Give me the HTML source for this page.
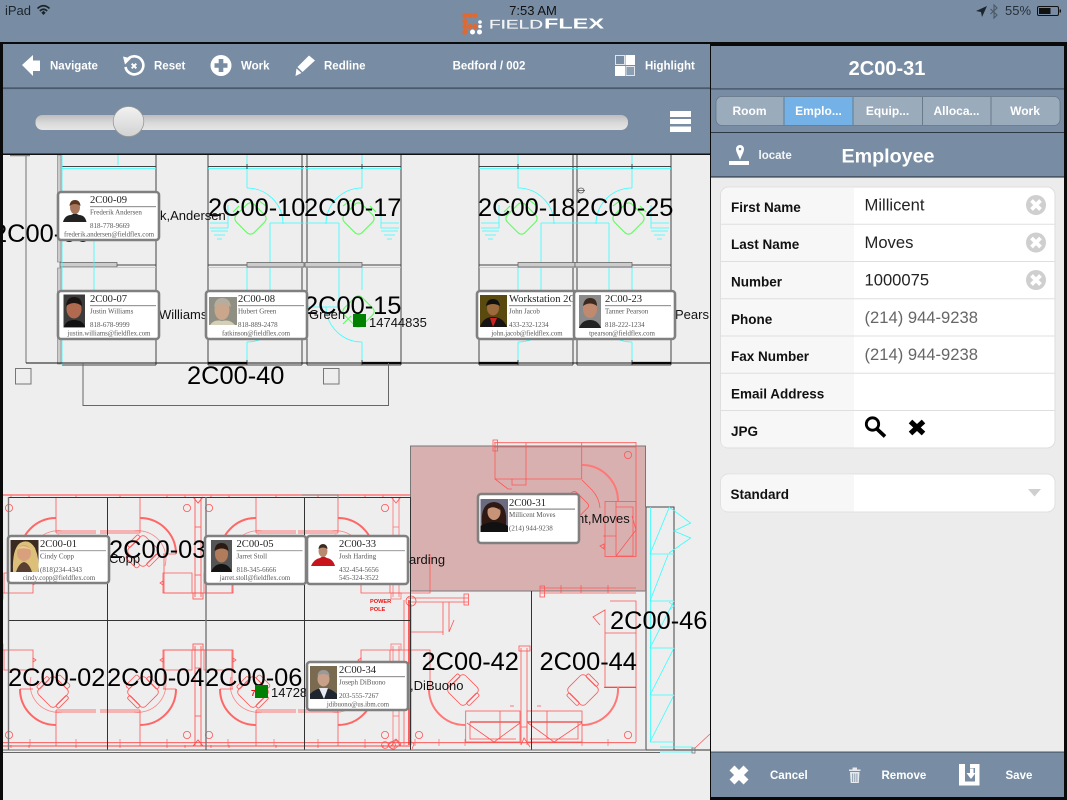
<!DOCTYPE html>
<html><head><meta charset="utf-8"><title>FieldFLEX</title>
<style>
html,body{margin:0;padding:0;background:#eee;width:1067px;height:800px;overflow:hidden}
svg{display:block;position:absolute;left:0;top:0}
text{font-family:"Liberation Sans",sans-serif}
.r{font-size:25.4px;fill:#000}
.n{font-size:13px;fill:#111}
.cd text{font-family:"Liberation Serif",serif}
.t{font-size:10.6px;fill:#222}
.s{font-size:7px;fill:#555}
.e{font-size:6.8px;fill:#555;text-anchor:middle}
.tb{font-size:11.5px;font-weight:bold;fill:#fff}
.tab{font-size:12px;font-weight:bold;fill:#fff;text-anchor:middle}
.lb{font-size:13.5px;font-weight:bold;fill:#111}
.v{font-size:16.6px;fill:#222}
.p{font-size:16.6px;fill:#666}
</style></head><body>
<svg width="1067" height="800" viewBox="0 0 1067 800" xmlns="http://www.w3.org/2000/svg">
<defs>
<clipPath id="pl"><rect x="3" y="155" width="707" height="645"/></clipPath>
<g id="ra" fill="none" stroke="#f55" stroke-width=".8">
<path d="M140 497V533M100 531H140M100 533H140M163 554H176M120 495V498M167 495V498M185 495V498"/>
<path d="M140 518A36 36 0 0 1 176 554" stroke="#f66" stroke-width="2"/>
<path d="M134 531A28 28 0 0 1 165 566" stroke-opacity=".7"/>
<g transform="rotate(45 143 551)"><rect x="131" y="539" width="24" height="24" rx="4"/><rect x="127.500" y="543" width="4" height="15" rx="1.500"/><rect x="154.500" y="543" width="4" height="15" rx="1.500"/><rect x="135" y="563" width="16" height="5" rx="2"/></g>
<path d="M163 573H192V593H163ZM192 593H232V554"/>
<path d="M160 583L163 581V585Z"/>
<path d="M195 497V597M201 497V597M195 527H201M195 575H201" stroke-opacity=".8"/>
<rect x="193" y="593" width="10" height="6" stroke-opacity=".8"/>
<circle cx="187" cy="508" r="3.600"/>
<path d="M193 497L198 503L203 497"/>
</g>
<g id="ta" fill="none">
<path d="M208 155V365M302 155V365M208 166.500H304M208 265H304M208 365H302" stroke="#444" stroke-width="1"/>
<path d="M247 155V188M247 342V363M270 223V307M210 223H228V228H210M228 223V205M247 268V290" stroke="#3ff" stroke-width=".8"/>
<path d="M208 168.500H304M208 267.500H304M270 223H304M270 307H304" stroke="#3ff" stroke-width=".8"/>
<path d="M247 188A36 36 0 0 1 283 224M247 342A36 36 0 0 0 283 307" stroke="#3ff" stroke-width=".8"/>
<path d="M211 231H228M214 235H225M217 239H222" stroke="#3ff" stroke-width=".8"/>
<rect x="247" y="262.500" width="57" height="4.500" fill="#ccc" stroke="#666" stroke-width=".8"/>
<g stroke="#5f5" stroke-width="1"><rect x="238" y="206" width="25" height="25" rx="5" transform="rotate(45 250.500 218.500)"/><rect x="238" y="299" width="25" height="25" rx="5" transform="rotate(45 250.500 311.500)"/><path d="M258 200l8 6M233 212l6-6M258 316l8 8"/></g>
<path d="M208 363H247" stroke="#000" stroke-width="2.200"/>
<path d="M247 164V169M247 360V365" stroke="#222" stroke-width=".8"/>
</g>
</defs>

<rect width="1067" height="800" fill="#eeeeee"/>

<!-- plan -->
<g clip-path="url(#pl)">
<!-- upper block -->
<path d="M26 155V363" stroke="#888" stroke-width="1.200" fill="none"/>
<rect x="57.500" y="155" width="3.500" height="107" fill="#ccc" stroke="#888" stroke-width=".7"/>
<rect x="57.500" y="268" width="3.500" height="96" fill="#ccc" stroke="#888" stroke-width=".7"/>
<rect x="60" y="262.500" width="57" height="4.500" fill="#ccc" stroke="#666" stroke-width=".8"/>
<path d="M62 166.500H156M117 265H156M62 365H156M156 155V365" stroke="#444" fill="none"/>
<path d="M62 155V365M118 155V165M94 240V290" stroke="#3ff" stroke-width=".8" fill="none"/>
<path d="M62 168.500H156M62 267.500H156" stroke="#3ff" stroke-width=".8"/>
<use href="#ta"/>
<use href="#ta" transform="matrix(-1 0 0 1 609 0)"/>
<use href="#ta" transform="translate(271 0)"/>
<use href="#ta" transform="matrix(-1 0 0 1 879 0)"/>
<path d="M26 363H710" stroke="#111" stroke-width="1" fill="none"/>
<path d="M83 363V405.500H388.500V363" stroke="#666" stroke-width="1" fill="none"/>
<rect x="15.500" y="368.500" width="15.500" height="15.500" fill="none" stroke="#777"/>
<rect x="323.500" y="368.500" width="15.500" height="15.500" fill="none" stroke="#777"/>
<path d="M10 155.500H30" stroke="#888" stroke-width="1.500"/>
<ellipse cx="581" cy="190.500" rx="3" ry="2.500" fill="none" stroke="#555" stroke-width=".8"/>
<path d="M577 190.500H585" stroke="#555" stroke-width=".8"/>

<!-- highlight -->
<rect x="410.500" y="446" width="235" height="145" fill="#d9b0b0" stroke="#777" stroke-width="1"/>

<!-- lower block red -->
<use href="#ra"/>
<use href="#ra" transform="matrix(-1 0 0 1 196 0)"/>
<use href="#ra" transform="matrix(-1 0 0 1 396 0)"/>
<use href="#ra" transform="translate(198 0)"/>
<use href="#ra" transform="matrix(1 0 0 -1 0 1243)"/>
<use href="#ra" transform="matrix(-1 0 0 -1 196 1243)"/>
<use href="#ra" transform="matrix(-1 0 0 -1 396 1243)"/>
<use href="#ra" transform="matrix(1 0 0 -1 198 1243)"/>
<path d="M3 495H410" stroke="#f77" stroke-width="1.400" fill="none"/>
<path d="M3 742.700H636M3 746H410" stroke="#f44" stroke-width=".9" fill="none"/>
<path d="M30 739V746M76 739V746M120 739V746M167 739V746M228 739V746M274 739V746M318 739V746M365 739V746M415 739V746M439 739V746M465 739V746M582 739V746M608 739V746" stroke="#f66" stroke-width=".7"/>

<!-- 2C00-31 room + right rooms red -->
<g fill="none" stroke="#f55" stroke-width=".8">
<path d="M494 442.700H636M494 447H636M495 443V479H581.700V443M526 443V479M495 479L508 489H512M512 479V485H526V479"/>
<rect x="493" y="440" width="4.500" height="11" />
<path d="M582 465A36 36 0 0 1 618 501" stroke-width="2" stroke="#f77"/>
<path d="M582 480L592 490A30 30 0 0 1 600 508" />
<g transform="rotate(45 575 505)"><rect x="564" y="495" width="22" height="20" rx="3"/></g>
<rect x="605" y="501.500" width="31" height="55"/>
<path d="M616 507H633V556H616M603 536H616M616 501V556M632 516L636 530L616 556M600 546L604 544V549Z"/>
<circle cx="628" cy="455" r="3.600"/>
<path d="M636 442V556M540 588H636M540 593H636M561 585V593M581 585V593M608 585V593"/>
<rect x="540" y="586" width="4.500" height="11"/>
<path d="M408 598H468M408 602H468"/>
<rect x="464" y="594" width="4.500" height="11"/>
<circle cx="411" cy="601" r="5"/>
<path d="M443 602V632H411M449 602V632L454 620M404 600V745M411 604V745"/>
<path d="M409 600V745" stroke="#f22" stroke-width="1.400"/>
<path d="M443 632V635M610 601H636V633H605V610L593 617L600 625M636 601V742M605 633V687H636"/>
<path d="M604 687.500H636" stroke="#f22"/>
<path d="M429 690A36 36 0 0 0 465 725M618 687A36 36 0 0 1 582 725" stroke-width="2" stroke="#f77"/>
<g transform="rotate(45 463 690)"><rect x="451" y="678" width="24" height="24" rx="4"/><rect x="447.500" y="682" width="4" height="15" rx="1.500"/><rect x="474.500" y="682" width="4" height="15" rx="1.500"/></g>
<g transform="rotate(-45 583 690)"><rect x="571" y="678" width="24" height="24" rx="4"/><rect x="567.500" y="682" width="4" height="15" rx="1.500"/><rect x="594.500" y="682" width="4" height="15" rx="1.500"/></g>
<rect x="465.700" y="711" width="54.300" height="31"/>
<rect x="527" y="711" width="55" height="31"/>
<path d="M470 722H520M527 722H582" stroke="#e11" stroke-width="1"/>
<path d="M467 723L494 742L520 723M528 723L554 742L582 723M470 722V739H516M578 722V739H530M500 711V739M547 711V739"/>
<path d="M521 648V745M527 648V745"/>
<rect x="519" y="646" width="11" height="5"/>
<path d="M521 727H527M521 745L524 738L530 747M510 706h4M537 706h4"/>
<circle cx="419" cy="735" r="3.600"/><circle cx="628" cy="735" r="3.600"/><circle cx="385" cy="745" r="3.400"/><circle cx="392" cy="745" r="3.400"/>
<path d="M388 745l8-6l5 5l-8 6zM408 739l6 5l-2 5"/>
</g>

<!-- lower block black -->
<path d="M8.500 497.500H410M107.500 497V750M304.500 497V750M410.500 497V750M8 620.500H410M531.500 591V750" stroke="#333" stroke-width="1" fill="none"/>
<path d="M8.500 497V750M206 497V750" stroke="#777" stroke-width="1.400" fill="none"/>
<path d="M302 495H338V499" stroke="#888" fill="none"/>
<path d="M3 750H660M3 752.500H660" stroke="#666" stroke-width=".9" fill="none"/>
<path d="M660 750H710" stroke="#333"/>
<path d="M646 507V750" stroke="#888" stroke-width="1.600"/>
<path d="M646 507H674V750H646" stroke="#444" fill="none"/>

<!-- cyan panel -->
<g fill="none" stroke="#3ff" stroke-width=".8">
<path d="M650.500 507V742M650 554H674M650 601H674M650 648H674M650 695H674M650 742H674"/>
<path d="M650 554L669 508M650 601L668 555M650 648L674 601M650 695L674 648M650 742L674 695"/>
<path d="M669 507L690.700 523L674 531L690.700 538L669 553M669 602L674 606L669 610"/>
<path d="M660 747H692V752H660"/>
</g>
<rect x="692" y="748" width="3" height="5" fill="none" stroke="#777" stroke-width=".8"/>
<path d="M695 748L710 734" stroke="#f55" stroke-width=".8"/>

<!-- labels behind cards -->
<text x="370" y="603" font-size="5.600" font-weight="bold" fill="#e11">POWER</text>
<text x="370" y="611" font-size="5.600" font-weight="bold" fill="#e11">POLE</text>
<text class="r" x="-7" y="242">2C00-09</text>
<text class="r" x="208" y="216">2C00-10</text>
<text class="r" x="304" y="216">2C00-17</text>
<text class="r" x="478" y="216">2C00-18</text>
<text class="r" x="576" y="216">2C00-25</text>
<text class="r" x="304" y="314">2C00-15</text>
<text class="r" x="187" y="384">2C00-40</text>
<text class="r" x="109" y="558">2C00-03</text>
<text class="r" x="8" y="686">2C00-02</text>
<text class="r" x="107" y="686">2C00-04</text>
<text class="r" x="205" y="686">2C00-06</text>
<text class="r" x="421.500" y="670">2C00-42</text>
<text class="r" x="539.500" y="670">2C00-44</text>
<text class="r" x="610" y="629">2C00-46</text>
<text class="n" x="160" y="220">k,Andersen</text>
<text class="n" x="159" y="319">Williams</text>
<text class="n" x="309" y="319">Green</text>
<text class="n" x="675" y="319">Pears</text>
<text class="n" x="109" y="563">Copp</text>
<text class="n" x="409" y="564">arding</text>
<text class="n" x="577" y="523">nt,Moves</text>
<text class="n" x="410" y="690">,DiBuono</text>
<rect x="353" y="314" width="13" height="13" fill="#008000"/>
<text class="n" x="369" y="327">14744835</text>
<rect x="255" y="685" width="13" height="13" fill="#008000"/>
<text class="n" x="271" y="697">14728</text>
<text x="251" y="696" font-size="8" font-weight="bold" fill="#e11">7</text>

<!-- cards -->
<g class="cd">
<g transform="translate(57 191)"><rect x="1" y="1" width="101" height="48" rx="3" fill="#fff" stroke="#808080" stroke-width="2.600"/>
<path d="M6 31Q8 24 14 24L18 22L22 24Q28 24 29.500 31Z" fill="#222"/><ellipse cx="18" cy="16.500" rx="5" ry="6.500" fill="#a8765a"/><path d="M12.500 15Q13 9 18 9Q23 9 23.500 15Q18 11 12.500 15Z" fill="#5a3520"/>
<text class="t" x="33" y="12">2C00-09</text><rect x="33" y="15" width="66" height="1.200" fill="#999"/><text class="s" x="33" y="23.500">Frederik Andersen</text><text class="s" x="33" y="37">818-778-9669</text><text class="e" x="52" y="45.500">frederik.andersen@fieldflex.com</text></g>

<g transform="translate(57 290)"><rect x="1" y="1" width="101" height="48" rx="3" fill="#fff" stroke="#808080" stroke-width="2.600"/>
<rect x="6.500" y="4.500" width="21.500" height="33" fill="#3b3b3b"/><ellipse cx="17" cy="19" rx="7.500" ry="9.500" fill="#b06a50"/><path d="M9 16Q10 7 17 7Q25 7 25 16Q17 10 9 16Z" fill="#1c1412"/><path d="M7 37Q9 30 17 30Q26 30 28 37Z" fill="#111"/>
<text class="t" x="33" y="12">2C00-07</text><rect x="33" y="15" width="66" height="1.200" fill="#999"/><text class="s" x="33" y="23.500">Justin Williams</text><text class="s" x="33" y="37">818-678-9999</text><text class="e" x="52" y="45.500">justin.williams@fieldflex.com</text></g>

<g transform="translate(205 290)"><rect x="1" y="1" width="101" height="48" rx="3" fill="#fff" stroke="#808080" stroke-width="2.600"/>
<rect x="4" y="7" width="28" height="28" fill="#8f8f84"/><ellipse cx="17" cy="20" rx="7.500" ry="10" fill="#c9a68c"/><path d="M9 17Q10 8 17 8Q25 8 26 17Q17 11 9 17Z" fill="#b5ada0"/><path d="M5 35Q9 29 17 31Q25 29 30 35Z" fill="#d6cfb8"/>
<text class="t" x="33" y="12">2C00-08</text><rect x="33" y="15" width="66" height="1.200" fill="#999"/><text class="s" x="33" y="23.500">Hubert Green</text><text class="s" x="33" y="37">818-889-2478</text><text class="e" x="51" y="45.500">fatkinson@fieldflex.com</text></g>

<g transform="translate(476 290)"><rect x="1" y="1" width="101" height="48" rx="3" fill="#fff" stroke="#808080" stroke-width="2.600"/>
<rect x="4" y="5" width="27" height="32" fill="#5a4a10"/><ellipse cx="17" cy="18" rx="6" ry="7.500" fill="#9c6a3c"/><path d="M10 16Q11 9 17 9Q23 9 24 16Q17 12 10 16Z" fill="#111"/><path d="M4 37Q7 27 17 27Q27 27 31 37Z" fill="#181414"/><path d="M14 28L17 37L21 28Z" fill="#c22"/>
<text class="t" x="33" y="12">Workstation 2C00-22</text><rect x="33" y="15" width="62" height="1.200" fill="#999"/><text class="s" x="33" y="23.500">John Jacob</text><text class="s" x="33" y="37">433-232-1234</text><text class="e" x="51" y="45.500">john.jacob@fieldflex.com</text></g>

<g transform="translate(573 290)"><rect x="1" y="1" width="101" height="48" rx="3" fill="#fff" stroke="#808080" stroke-width="2.600"/>
<rect x="6" y="5" width="22" height="33" fill="#8a8a8a"/><ellipse cx="17" cy="19" rx="7" ry="9" fill="#c08a70"/><path d="M10 16Q11 8 17 8Q24 8 24 16Q17 11 10 16Z" fill="#3c2a1e"/><path d="M6 38Q9 30 17 30Q25 30 28 38Z" fill="#222"/>
<text class="t" x="32" y="12">2C00-23</text><rect x="32" y="15" width="66" height="1.200" fill="#999"/><text class="s" x="32" y="23.500">Tanner Pearson</text><text class="s" x="32" y="37">818-222-1234</text><text class="e" x="49" y="45.500">tpearson@fieldflex.com</text></g>

<g transform="translate(7 535)"><rect x="1" y="1" width="101" height="47" rx="3" fill="#fff" stroke="#808080" stroke-width="2.600"/>
<rect x="3.500" y="5" width="28" height="32" fill="#3a2a20"/><path d="M6 37Q5 14 13 8Q22 3 28 13Q33 25 31 37Z" fill="#dcc07a"/><ellipse cx="17" cy="18" rx="7" ry="8" fill="#d9a07e"/><path d="M10 14Q16 8 25 15Q18 12 10 14Z" fill="#e8d08c"/><path d="M9 37Q12 28 17 27Q22 28 25 37Z" fill="#5a4030"/>
<text class="t" x="33" y="12">2C00-01</text><rect x="33" y="15" width="66" height="1.200" fill="#aaa"/><text class="s" x="33" y="23.500">Cindy Copp</text><text class="s" x="33" y="37">(818)234-4343</text><text class="e" x="52" y="45">cindy.copp@fieldflex.com</text></g>

<g transform="translate(204 535)"><rect x="1" y="1" width="101" height="48" rx="3" fill="#fff" stroke="#808080" stroke-width="2.600"/>
<rect x="7" y="5" width="21" height="32" fill="#555"/><ellipse cx="17.500" cy="19" rx="6.500" ry="8.500" fill="#b07c5c"/><path d="M10.500 16Q11 8 17.500 8Q24 8 24.500 16Q18 11 10.500 16Z" fill="#2a1a12"/><path d="M7 37Q10 29 17.500 29Q25 29 28 37Z" fill="#141414"/>
<text class="t" x="32.500" y="12">2C00-05</text><rect x="32.500" y="15" width="66" height="1.200" fill="#aaa"/><text class="s" x="32.500" y="23.500">Jarret Stoll</text><text class="s" x="32.500" y="37">818-345-6666</text><text class="e" x="51" y="45">jarret.stoll@fieldflex.com</text></g>

<g transform="translate(306 535)"><rect x="1" y="1" width="101" height="48" rx="3" fill="#fff" stroke="#808080" stroke-width="2.600"/>
<path d="M5 31Q8 24 14 23L17 21L21 23Q27 24 29 31Z" fill="#c8141c"/><ellipse cx="17" cy="16" rx="4.500" ry="6" fill="#b88a70"/><path d="M12.500 14Q13 9 17 9Q21 9 21.500 14Q17 11 12.500 14Z" fill="#3c2a20"/>
<text class="t" x="33" y="12">2C00-33</text><rect x="33" y="15" width="66" height="1.200" fill="#aaa"/><text class="s" x="33" y="23.500">Josh Harding</text><text class="s" x="33" y="37">432-454-5656</text><text class="s" x="33" y="45">545-324-3522</text></g>

<g transform="translate(477 493)"><rect x="1" y="1" width="101" height="49" rx="3" fill="#fff" stroke="#808080" stroke-width="2.600"/>
<rect x="3.500" y="6" width="27.500" height="33" fill="#6a6a80"/><path d="M5 32Q3 10 17 9Q31 10 29 32Z" fill="#2e1a12"/><ellipse cx="17" cy="19" rx="6.500" ry="8" fill="#c89478"/><path d="M11 16Q16 12 23 17Q22 9 15 10Q11 11 11 16Z" fill="#2e1a12"/><path d="M3.500 39V33Q10 29 17 29Q25 29 31 33V39Z" fill="#111"/>
<text class="t" x="32" y="13">2C00-31</text><rect x="32" y="15.500" width="66" height="1.200" fill="#888"/><text class="s" x="32" y="24">Millicent Moves</text><text class="s" x="32" y="37.500">(214) 944-9238</text></g>

<g transform="translate(306 661)"><rect x="1" y="1" width="101" height="48" rx="3" fill="#fff" stroke="#808080" stroke-width="2.600"/>
<rect x="4" y="5" width="27" height="33" fill="#7a6a50"/><ellipse cx="17.500" cy="18" rx="6" ry="7.500" fill="#c9a08a"/><path d="M11.500 15Q12 9 17.500 9Q23 9 23.500 15Q17 11 11.500 15Z" fill="#9a9a9a"/><path d="M4 38V33Q10 27 17.500 27Q25 27 31 33V38Z" fill="#1f2630"/><path d="M13 27L18 38L22 27Z" fill="#e8e8f0"/>
<text class="t" x="33" y="12">2C00-34</text><rect x="33" y="15" width="66" height="1.200" fill="#999"/><text class="s" x="33" y="23.500">Joseph DiBuono</text><text class="s" x="33" y="37">203-555-7267</text><text class="e" x="52" y="45.500">jdibuono@us.ibm.com</text></g>
</g>
</g>

<!-- status + header -->
<rect x="0" y="0" width="1067" height="155" fill="#788da3"/>
<rect x="0" y="42" width="711" height="2" fill="#0a0a0a"/>
<rect x="0" y="43" width="3" height="757" fill="#0a0a0a"/>
<rect x="3" y="87.300" width="707" height="1.800" fill="#4b5a6b"/>
<rect x="3" y="153.500" width="707" height="1.500" fill="#111"/>

<text x="5" y="15" font-size="13" fill="#1c242c">iPad</text>
<g fill="none" stroke="#1c242c" stroke-width="1.600"><path d="M37.500 8.500Q43.500 3 49.500 8.500"/><path d="M39.800 11Q43.500 7.500 47.200 11"/></g><path d="M41.300 12.800L43.500 10.800L45.700 12.800L43.500 15Z" fill="#1c242c"/>
<text x="533" y="15" font-size="13" fill="#111" text-anchor="middle">7:53 AM</text>

<!-- logo -->
<g fill="#dd6a34"><circle cx="465" cy="15.500" r="2.700"/><circle cx="470" cy="15.500" r="2.700"/><circle cx="475" cy="15.500" r="2.700"/><circle cx="465" cy="21" r="2.700"/><circle cx="465" cy="26.500" r="2.700"/><circle cx="470" cy="26.500" r="2.700"/><circle cx="475" cy="26.500" r="2.700"/><circle cx="465" cy="32" r="2.700"/></g>
<g fill="#fff"><circle cx="480" cy="22" r="1.800"/><circle cx="480" cy="26.500" r="1.800"/><circle cx="472.500" cy="32" r="2.500"/><circle cx="479.500" cy="32" r="2.500"/></g>
<text x="489" y="28.500" font-size="12" fill="#f2f4f6" stroke="#f2f4f6" stroke-width=".2" textLength="54" lengthAdjust="spacingAndGlyphs">FIELD</text>
<text x="544" y="28.500" font-size="15" font-weight="bold" fill="#fff" textLength="60" lengthAdjust="spacingAndGlyphs">FLEX</text>

<!-- status right -->
<path d="M976 11L987 6L982 17L981 12Z" fill="#1c242c"/>
<path d="M990.500 9L997 15L994 18V5L997 8L990.500 14" fill="none" stroke="#4a5866" stroke-width="1.100"/>
<text x="1005" y="15" font-size="13" fill="#26303a">55%</text>
<rect x="1037.500" y="6.500" width="21" height="9" rx="1.500" fill="none" stroke="#111" stroke-width="1"/>
<rect x="1039" y="8" width="11.500" height="6" fill="#111"/>
<rect x="1059.500" y="9.500" width="1.500" height="3" fill="#111"/>

<!-- toolbar icons -->
<path d="M22 65L33 55V60.500H40V71H33V76Z" fill="#fff"/>
<text class="tb" x="50" y="69.500">Navigate</text>
<g fill="none" stroke="#fff" stroke-width="2.600"><path d="M127.500 59.500A9 9 0 1 1 125.500 67"/></g><path d="M123 56.500L131 58.500L125 64.500Z" fill="#fff"/><path d="M131.700 63.700L136.300 68.300M136.300 63.700L131.700 68.300" stroke="#fff" stroke-width="2"/>
<text class="tb" x="154" y="69.500">Reset</text>
<circle cx="221" cy="65.500" r="10.500" fill="#fff"/><path d="M221 59V72M214.500 65.500H227.500" stroke="#788da3" stroke-width="4.600"/>
<text class="tb" x="241" y="69.500">Work</text>
<path d="M309 55.500L315 60.500L302.500 72L297.500 67Z" fill="#fff"/><path d="M296.500 68.500L301.500 73L295.500 76Z" fill="#fff"/>
<text class="tb" x="324" y="69.500">Redline</text>
<text class="tb" x="489" y="69.500" text-anchor="middle">Bedford / 002</text>
<rect x="615.500" y="55.500" width="9" height="9" fill="none" stroke="#dfe5ea" stroke-width="1"/>
<rect x="625.500" y="55" width="9.500" height="10" fill="#fff"/>
<rect x="615" y="66" width="10" height="10" fill="#fff"/>
<rect x="626" y="66.500" width="8.500" height="9" fill="#8c9eb2" stroke="#dfe5ea" stroke-width="1"/>
<text class="tb" x="645" y="69.500">Highlight</text>

<!-- slider -->
<defs><linearGradient id="tr" x1="0" y1="0" x2="0" y2="1"><stop offset="0" stop-color="#bdbdbd"/><stop offset=".5" stop-color="#d8d8d8"/><stop offset="1" stop-color="#e6e6e6"/></linearGradient>
<linearGradient id="th" x1="0" y1="0" x2="0" y2="1"><stop offset="0" stop-color="#f2f2f2"/><stop offset="1" stop-color="#d2d2d2"/></linearGradient></defs>
<rect x="35.500" y="115" width="592.500" height="15" rx="7" fill="url(#tr)"/>
<ellipse cx="128.500" cy="121.500" rx="15.300" ry="15" fill="url(#th)" stroke="#9a9a9a" stroke-width=".8"/>
<rect x="670" y="111" width="21" height="6" fill="#fff"/><rect x="670" y="119" width="21" height="5" fill="#fff"/><rect x="670" y="126.500" width="21" height="5.500" fill="#fff"/>

<!-- right panel -->
<rect x="710" y="42" width="357" height="758" fill="#0a0a0a"/>
<rect x="711" y="46" width="353" height="131" fill="#788da3"/>
<rect x="711" y="177" width="353" height="575" fill="#ececec"/>
<rect x="711" y="752.500" width="353" height="44.500" fill="#788da3"/>
<rect x="711" y="751.500" width="353" height="1.200" fill="#4b5a6b"/>
<rect x="711" y="88.300" width="353" height="1.200" fill="#3f4d5c"/>
<rect x="711" y="132" width="353" height="1" fill="#2e3a46"/>
<rect x="711" y="176.500" width="353" height="1" fill="#1c242c"/>
<text x="887" y="75" font-size="20" font-weight="bold" fill="#fff" text-anchor="middle">2C00-31</text>

<!-- tabs -->
<rect x="716" y="96.500" width="344" height="29" rx="6" fill="#9aabbb" stroke="#667688" stroke-width=".8"/>
<rect x="784.500" y="97" width="68.500" height="28" fill="#73b1e6"/>
<path d="M784 97V125M853 97V125M922.500 97V125M991 97V125" stroke="#6a7a8c" stroke-width="1"/>
<text class="tab" x="749.500" y="115">Room</text>
<text class="tab" x="818.500" y="115">Emplo...</text>
<text class="tab" x="887.500" y="115">Equip...</text>
<text class="tab" x="956.500" y="115">Alloca...</text>
<text class="tab" x="1025" y="115">Work</text>

<!-- locate -->
<path d="M740 145A4 4 0 0 1 744 149C744 152 741.500 155.500 740 160C738.500 155.500 736 152 736 149A4 4 0 0 1 740 145Z" fill="#fff"/><circle cx="740" cy="149" r="1.300" fill="#788da3"/>
<rect x="729" y="161" width="20" height="4" fill="#fff"/>
<text x="758.500" y="159" font-size="11.500" font-weight="bold" fill="#f4f6f8">locate</text>
<text x="841.500" y="162.500" font-size="19.700" font-weight="bold" fill="#fff">Employee</text>

<!-- form -->
<rect x="720.500" y="187" width="334.500" height="261" rx="8" fill="#fff" stroke="#dedede" stroke-width="1"/>
<path d="M854 188H728.500Q721 188 721 195.500V440Q721 447.500 728.500 447.500H854Z" fill="#f7f7f7"/>
<path d="M721 224.200H1055M721 261.500H1055M721 298.800H1055M721 336H1055M721 373.300H1055M721 410.500H1055" stroke="#dfdfdf" stroke-width="1"/>
<text class="lb" x="731" y="212">First Name</text>
<text class="lb" x="731" y="249">Last Name</text>
<text class="lb" x="731" y="286.500">Number</text>
<text class="lb" x="731" y="324">Phone</text>
<text class="lb" x="731" y="361">Fax Number</text>
<text class="lb" x="731" y="398.500">Email Address</text>
<text class="lb" x="731" y="436">JPG</text>
<text class="v" x="864.500" y="210.500">Millicent</text>
<text class="v" x="864.500" y="248">Moves</text>
<text class="v" x="864.500" y="285.500">1000075</text>
<text class="p" x="864.500" y="323">(214) 944-9238</text>
<text class="p" x="864.500" y="360">(214) 944-9238</text>
<g><circle cx="1036" cy="205" r="10" fill="#cfcfcf"/><path d="M1031.500 200.500L1040.500 209.500M1040.500 200.500L1031.500 209.500" stroke="#fff" stroke-width="3.800"/>
<circle cx="1036" cy="242.500" r="10" fill="#cfcfcf"/><path d="M1031.500 238L1040.500 247M1040.500 238L1031.500 247" stroke="#fff" stroke-width="3.800"/>
<circle cx="1036" cy="280" r="10" fill="#cfcfcf"/><path d="M1031.500 275.500L1040.500 284.500M1040.500 275.500L1031.500 284.500" stroke="#fff" stroke-width="3.800"/></g>
<circle cx="872.500" cy="424" r="6.200" fill="none" stroke="#000" stroke-width="2.800"/><path d="M877 429L885 436.500" stroke="#000" stroke-width="3.600"/>
<path d="M910.500 421.500L923.500 433.500M923.500 421.500L910.500 433.500" stroke="#000" stroke-width="5.200"/>

<rect x="720.500" y="474" width="334.500" height="38" rx="8" fill="#fff" stroke="#e0e0e0" stroke-width="1"/>
<path d="M854 475H728.500Q721 475 721 482.500V504Q721 511.500 728.500 511.500H854Z" fill="#f7f7f7"/>
<text class="lb" x="730.500" y="499">Standard</text>
<path d="M1028 489H1041L1034.500 496.500Z" fill="#cfcfcf"/>

<!-- footer -->
<path d="M732 768L746 782M746 768L732 782" stroke="#fff" stroke-width="7"/>
<text class="tb" x="770" y="779">Cancel</text>
<path d="M849 769.500H860.500V771H849ZM852.500 769.500V767.500H857V769.500M850 772H859.500L858.800 783H850.700Z" fill="#e6eaee"/><path d="M852.700 773.500V782M854.800 773.500V782M856.900 773.500V782" stroke="#788da3" stroke-width=".8"/>
<text class="tb" x="881.500" y="779">Remove</text>
<path d="M959 764H965V781.500H975V768H970V764H979.500V785.500H959Z" fill="#fff"/>
<path d="M970 768.500H973.500V773H975.500L971 779L966.500 773H970Z" fill="#fff"/>
<text class="tb" x="1005.500" y="779">Save</text>
</svg>
</body></html>
